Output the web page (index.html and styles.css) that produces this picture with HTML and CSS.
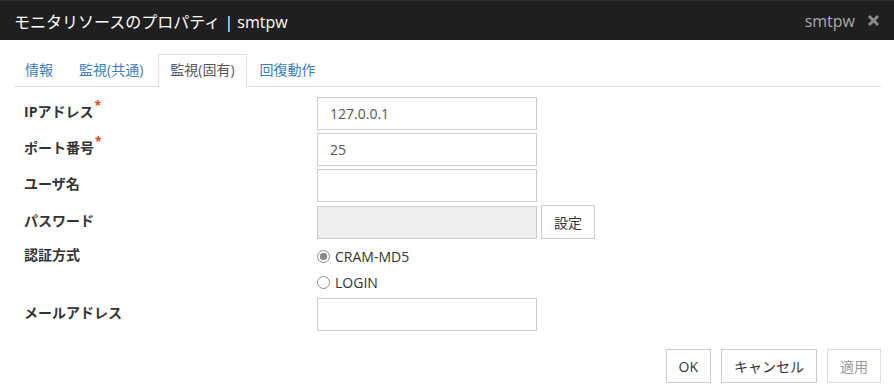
FILE: index.html
```html
<!DOCTYPE html>
<html lang="ja">
<head>
  <meta charset="UTF-8" />
  <title>モニタリソースのプロパティ | smtpw</title>
  <link rel="stylesheet" href="styles.css">
</head>
<body>
  <div class="dialog">
    <div class="dialog-header">
      <span class="dialog-title">モニタリソースのプロパティ | smtpw</span>
      <span class="dialog-name">smtpw</span>
      <svg class="close-icon" width="13" height="13" viewBox="0 0 13 13">
        <path d="M2 2 L11 11 M11 2 L2 11" stroke="#8a8a8a" stroke-width="3" stroke-linecap="butt" />
      </svg>
    </div>

    <ul class="tabs">
      <li class="tab">情報</li>
      <li class="tab">監視(共通)</li>
      <li class="tab active">監視(固有)</li>
      <li class="tab">回復動作</li>
    </ul>

    <div class="form">
      <label class="form-label">IPアドレス<span class="required">*</span></label>
      <div class="form-field"><input class="text-input" type="text" value="127.0.0.1" /></div>

      <label class="form-label">ポート番号<span class="required">*</span></label>
      <div class="form-field"><input class="text-input" type="text" value="25" /></div>

      <label class="form-label">ユーザ名</label>
      <div class="form-field"><input class="text-input" type="text" value="" /></div>

      <label class="form-label">パスワード</label>
      <div class="form-field">
        <input class="text-input readonly" type="text" value="" readonly />
        <button class="btn btn-small">設定</button>
      </div>

      <label class="form-label label-top">認証方式</label>
      <div class="radio-group">
        <label class="radio"><input type="radio" name="auth" checked /> CRAM-MD5</label>
        <label class="radio"><input type="radio" name="auth" /> LOGIN</label>
      </div>

      <label class="form-label">メールアドレス</label>
      <div class="form-field"><input class="text-input" type="text" value="" /></div>
    </div>

    <div class="dialog-footer">
      <button class="btn">OK</button>
      <button class="btn">キャンセル</button>
      <button class="btn" disabled>適用</button>
    </div>
  </div>
</body>
</html>
```

FILE: styles.css
```css
body, html {
  margin: 0;
  padding: 0;
  background: #fff;
  font-family: "Open Sans", "Noto Sans CJK JP", sans-serif;
  font-size: 14px;
  color: #333;
}
.dialog {
  width: 894px;
  height: 389px;
  overflow: hidden;
}
.dialog-header {
  height: 40px;
  background: #1f1f1f;
  border-top: 1px solid #2c2c2c;
  display: flex;
  align-items: center;
  padding: 0 14px;
  box-sizing: border-box;
}
.dialog-title {
  flex: 1;
  color: #fff;
  font-size: 16px;
}
.dialog-name {
  color: #aaa;
  font-size: 16px;
  margin-right: 12px;
}
.close-icon {
  display: block;
}
.tabs {
  list-style: none;
  margin: 15px 13px 0 14px;
  padding: 0;
  display: flex;
  border-bottom: 1px solid #ddd;
  height: 31px;
}
.tab {
  padding: 0 12px 0 10px;
  margin-right: 2px;
  line-height: 30px;
  height: 31px;
  color: #3a7dc0;
  border: 1px solid transparent;
  border-bottom: none;
  margin-top: -1px;
}
.tab.active {
  color: #555;
  border-color: #ddd;
  background: #fff;
  height: 32px;
  padding: 0 11px;
}
.form {
  display: grid;
  grid-template-columns: 293px 1fr;
  row-gap: 3px;
  align-items: center;
  padding: 10px 24px 0;
}
.form-label {
  font-weight: bold;
  color: #333;
  padding-bottom: 5px;
}
.label-top {
  align-self: start;
  margin-top: 0;
  padding-bottom: 0;
  line-height: 26px;
}
.required {
  color: #d9431e;
  font-size: 12px;
  vertical-align: top;
  position: relative;
  top: -4px;
  margin-left: 1px;
}
.form-field {
  display: flex;
  align-items: center;
}
.text-input {
  width: 220px;
  height: 33px;
  box-sizing: border-box;
  border: 1px solid #ccc;
  padding: 0 12px;
  font-family: inherit;
  font-size: 14px;
  color: #555;
  background: #fff;
  margin: 0;
}
.text-input.readonly {
  background: #eee;
}
.radio-group {
  padding-top: 1px;
}
.radio {
  display: flex;
  align-items: center;
  height: 26px;
  color: #333;
}
.radio input {
  appearance: none;
  width: 13px;
  height: 13px;
  border: 1px solid #8d8d8d;
  border-radius: 50%;
  margin: 0 5px 0 0;
  box-sizing: border-box;
  background: #fff;
}
.radio input:checked {
  background: radial-gradient(circle, #8a8a8a 0, #8a8a8a 3.5px, #fff 4px);
}
.btn {
  height: 34px;
  padding: 0 12px;
  border: 1px solid #ccc;
  background: #fff;
  color: #333;
  font-family: inherit;
  font-size: 14px;
}
.btn:disabled {
  color: #999;
  border-color: #ddd;
}
.btn-small {
  margin-left: 4px;
  height: 34px;
  width: 54px;
  padding: 0;
}
.dialog-footer {
  display: flex;
  justify-content: flex-end;
  gap: 10px;
  padding: 18px 13px 0 0;
}
```
